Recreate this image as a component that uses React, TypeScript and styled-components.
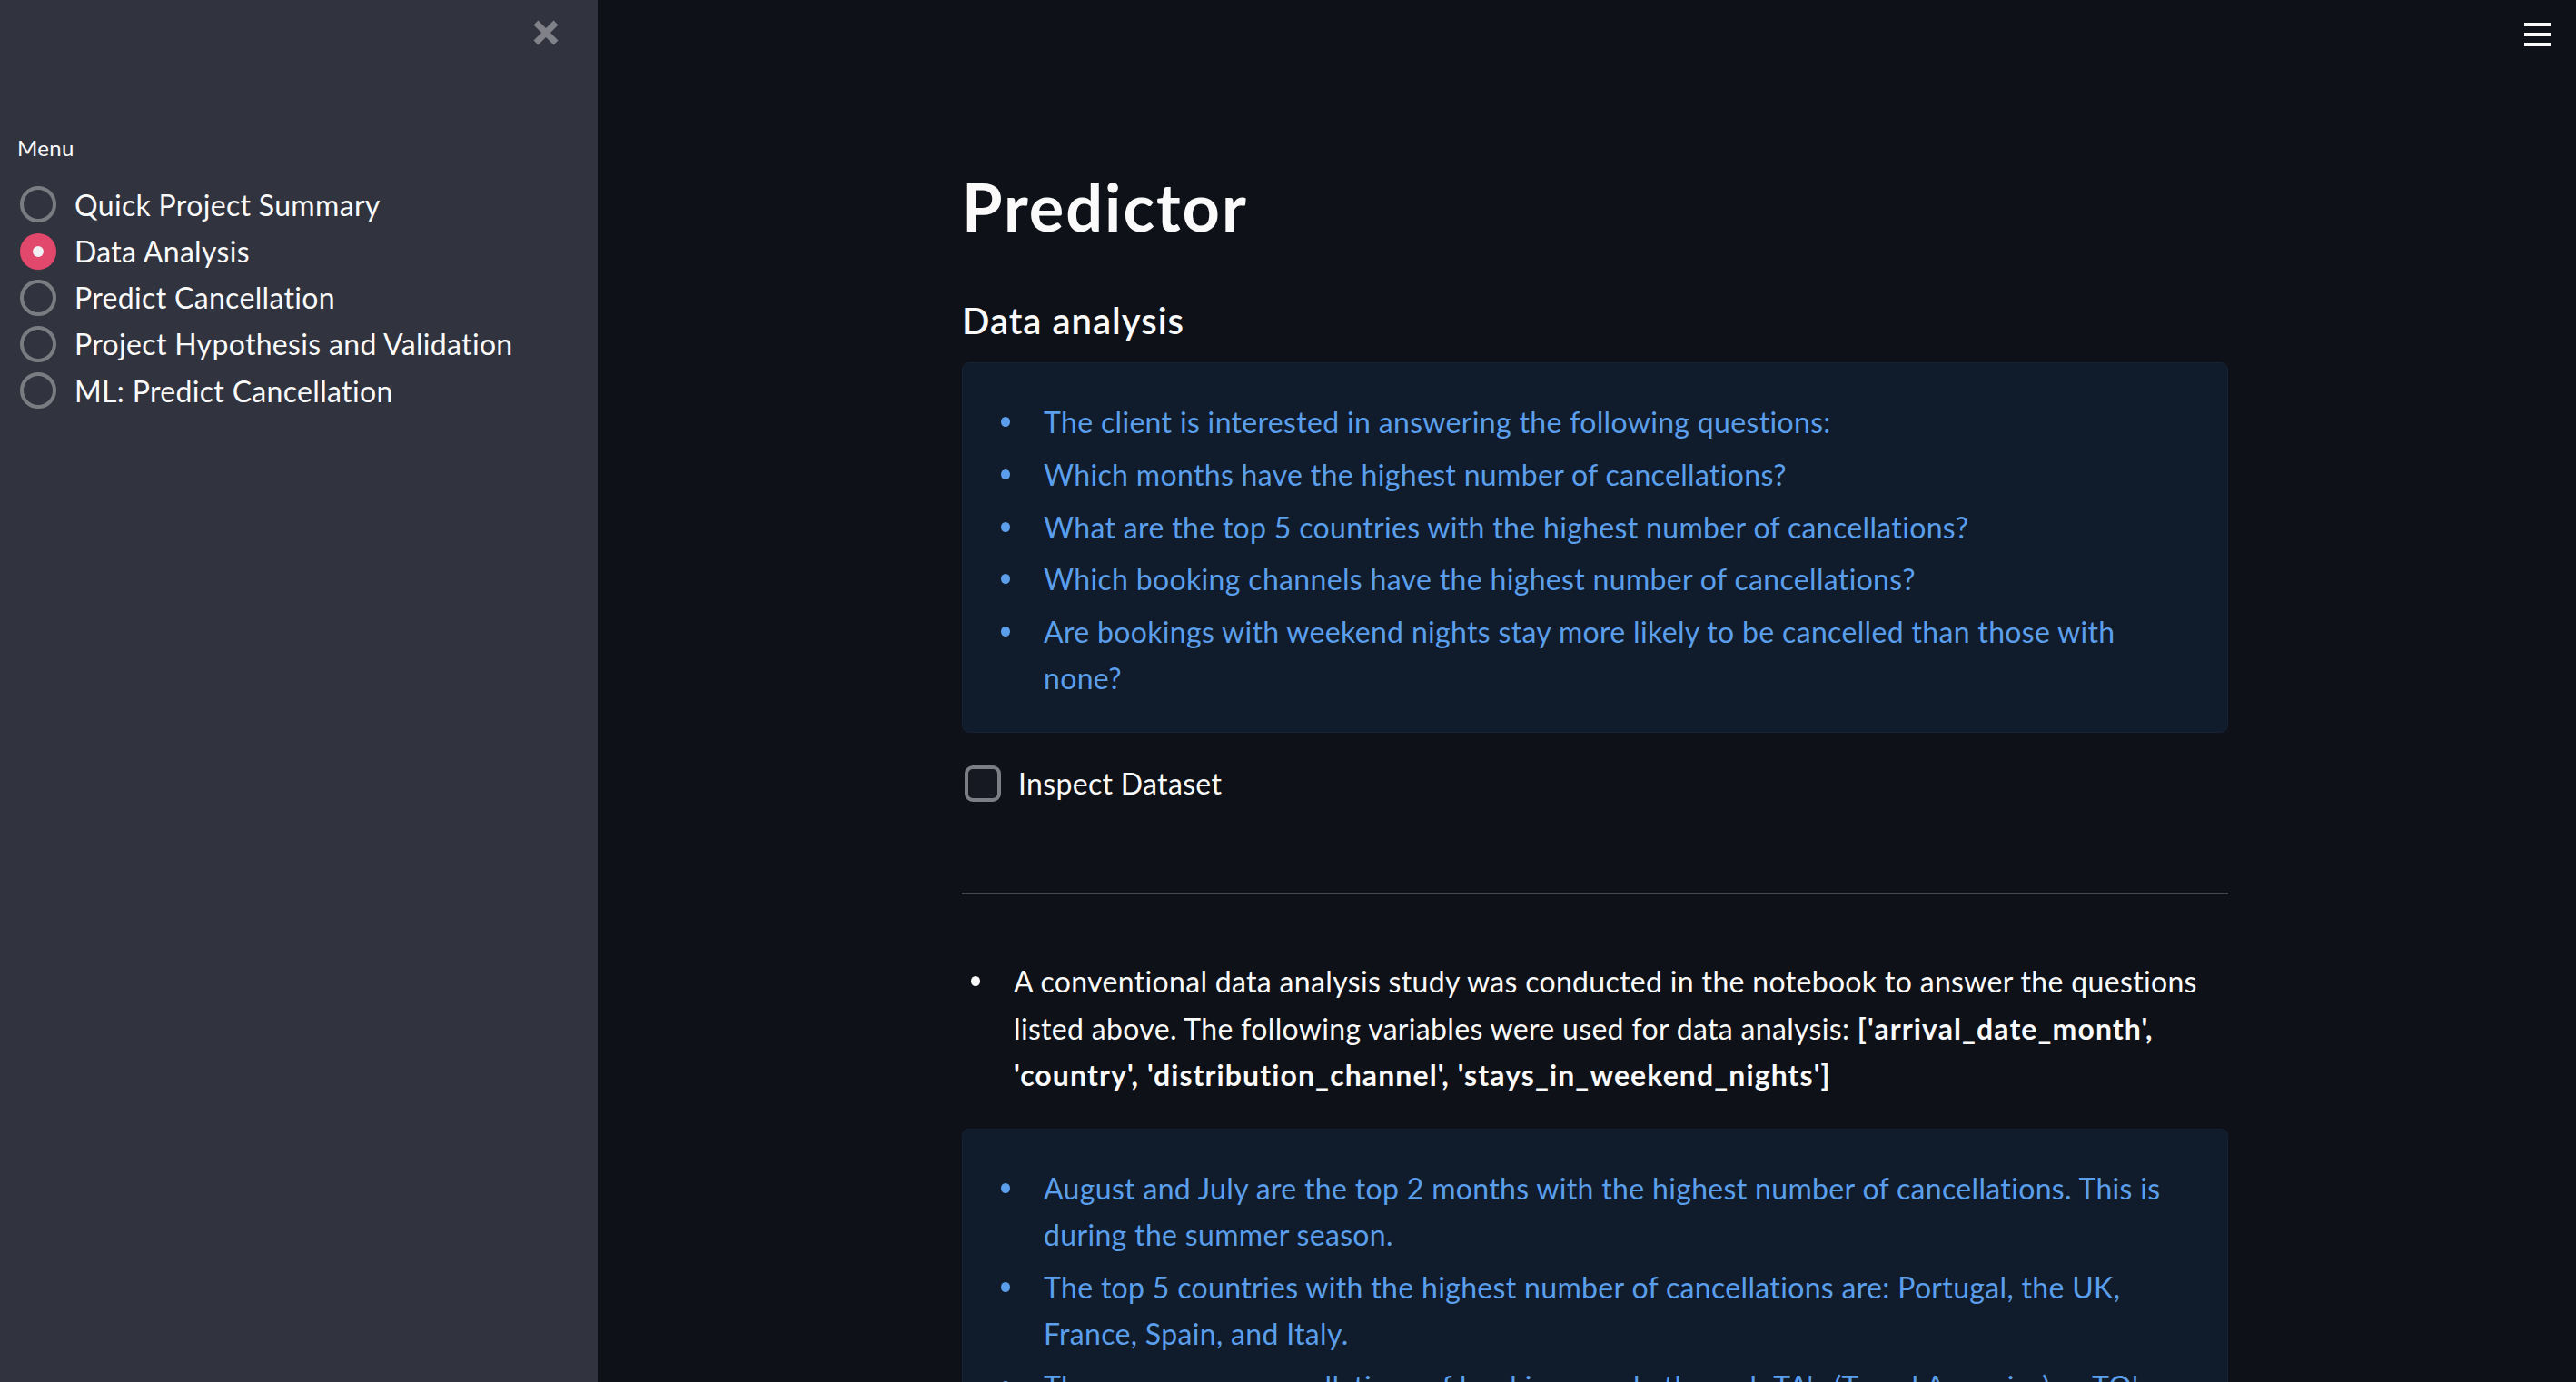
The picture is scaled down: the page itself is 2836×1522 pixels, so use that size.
import React, { useState } from "react";
import styled, { createGlobalStyle } from "styled-components";

const GlobalStyle = createGlobalStyle`
  html, body {
    margin: 0;
    padding: 0;
    background: #0e1117;
    color: #fafafa;
    font-family: Lato, "Liberation Sans", sans-serif;
    letter-spacing: 0.33px;
  }
  * {
    box-sizing: border-box;
  }
`;

const Shell = styled.div`
  display: flex;
  height: 100vh;
  overflow: hidden;
`;

const Sidebar = styled.aside`
  width: 658px;
  flex-shrink: 0;
  background: #31333f;
  padding: 22px 19px 0 19px;
  display: flex;
  flex-direction: column;
`;

const CloseRow = styled.div`
  display: flex;
  justify-content: flex-end;
  padding-right: 23px;
  height: 28px;
`;

const CloseButton = styled.button`
  background: none;
  border: none;
  padding: 0;
  width: 30px;
  height: 30px;
  margin-top: -1px;
  cursor: pointer;
  color: #808189;
`;

const MenuLabel = styled.div`
  margin-top: 99px;
  font-size: 24px;
  line-height: 1.2;
`;

const RadioList = styled.div`
  margin-top: 22px;
  display: flex;
  flex-direction: column;
`;

const RadioRow = styled.label`
  display: flex;
  align-items: center;
  gap: 20px;
  padding-left: 3px;
  font-size: 32px;
  line-height: 51.2px;
  cursor: pointer;
`;

const RadioDot = styled.span<{ $checked: boolean }>`
  width: 40px;
  height: 40px;
  border-radius: 50%;
  flex-shrink: 0;
  display: flex;
  align-items: center;
  justify-content: center;
  border: ${({ $checked }) => ($checked ? "none" : "4px solid #7b7c82")};
  background: ${({ $checked }) => ($checked ? "#e2486b" : "transparent")};
  &::after {
    content: "";
    display: ${({ $checked }) => ($checked ? "block" : "none")};
    width: 12px;
    height: 12px;
    border-radius: 50%;
    background: #f0f0f5;
  }
`;

const Main = styled.main`
  flex: 1;
  position: relative;
  overflow: hidden;
`;

const MenuButton = styled.button`
  position: absolute;
  top: 25px;
  right: 28px;
  width: 29px;
  height: 26px;
  padding: 0;
  background: none;
  border: none;
  display: flex;
  flex-direction: column;
  justify-content: space-between;
  cursor: pointer;
`;

const Bar = styled.span`
  display: block;
  height: 4px;
  background: #fafafa;
`;

const Content = styled.div`
  width: 1394px;
  margin-left: 401px;
  padding-top: 184px;
`;

const Title = styled.h1`
  margin: 0;
  font-size: 72px;
  font-weight: 700;
  line-height: 1.2;
  letter-spacing: 2px;
`;

const SubTitle = styled.h3`
  margin: 59px 0 0;
  font-size: 40px;
  font-weight: 600;
  line-height: 1.2;
  letter-spacing: 1px;
`;

const InfoBox = styled.div<{ $gap: number }>`
  margin-top: ${({ $gap }) => $gap}px;
  background: #101c2b;
  border: 1px solid #142236;
  border-radius: 8px;
  padding: 39px 64px 34px 32px;
  color: #5b9fec;
`;

const BulletList = styled.ul`
  margin: 0;
  padding-left: 57px;
  list-style: none;
  font-size: 32px;
  line-height: 51.2px;
  li {
    position: relative;
  }
  li::before {
    content: "";
    position: absolute;
    left: -47px;
    top: 20px;
    width: 10px;
    height: 11px;
    border-radius: 50%;
    background: currentColor;
  }
  li + li {
    margin-top: 6.4px;
  }
`;

const CheckRow = styled.label`
  margin-top: 30px;
  display: flex;
  align-items: center;
  gap: 19px;
  padding-left: 3px;
  font-size: 32px;
  line-height: 51.2px;
  cursor: pointer;
`;

const CheckBox = styled.span`
  width: 40px;
  height: 40px;
  border: 4px solid #7c7e85;
  border-radius: 9px;
  background: #161922;
  flex-shrink: 0;
`;

const Divider = styled.hr`
  margin: 95px 0 0;
  border: none;
  height: 2px;
  background: #45474d;
`;

const TextList = styled(BulletList)`
  margin-top: 70px;
  color: #fafafa;
  strong {
    letter-spacing: 1.1px;
  }
`;

const CloseIcon = () => (
  <svg width="30" height="30" viewBox="0 0 30 30">
    <path
      d="M4 4 L26 26 M26 4 L4 26"
      stroke="currentColor"
      strokeWidth="7"
      strokeLinecap="butt"
    />
  </svg>
);

const pages = [
  "Quick Project Summary",
  "Data Analysis",
  "Predict Cancellation",
  "Project Hypothesis and Validation",
  "ML: Predict Cancellation",
];

const questions = [
  "The client is interested in answering the following questions:",
  "Which months have the highest number of cancellations?",
  "What are the top 5 countries with the highest number of cancellations?",
  "Which booking channels have the highest number of cancellations?",
  "Are bookings with weekend nights stay more likely to be cancelled than those with none?",
];

const findings = [
  "August and July are the top 2 months with the highest number of cancellations. This is during the summer season.",
  "The top 5 countries with the highest number of cancellations are: Portugal, the UK, France, Spain, and Italy.",
  "There are more cancellations of bookings made through TA's (Travel Agencies) or TO's (Tour Operators) than through other channels.",
  "Bookings with weekend nights stay are slightly more likely to be cancelled.",
];

const App = () => {
  const [page, setPage] = useState("Data Analysis");

  return (
    <Shell>
      <GlobalStyle />
      <Sidebar>
        <CloseRow>
          <CloseButton aria-label="Close sidebar">
            <CloseIcon />
          </CloseButton>
        </CloseRow>
        <MenuLabel>Menu</MenuLabel>
        <RadioList>
          {pages.map((p) => (
            <RadioRow key={p} onClick={() => setPage(p)}>
              <RadioDot $checked={p === page} />
              {p}
            </RadioRow>
          ))}
        </RadioList>
      </Sidebar>
      <Main>
        <MenuButton aria-label="Menu">
          <Bar />
          <Bar />
          <Bar />
        </MenuButton>
        <Content>
          <Title>Predictor</Title>
          <SubTitle>Data analysis</SubTitle>
          <InfoBox $gap={22}>
            <BulletList>
              {questions.map((q) => (
                <li key={q}>{q}</li>
              ))}
            </BulletList>
          </InfoBox>
          <CheckRow>
            <CheckBox />
            Inspect Dataset
          </CheckRow>
          <Divider />
          <TextList>
            <li>
              A conventional data analysis study was conducted in the notebook
              to answer the questions listed above. The following variables
              were used for data analysis:{" "}
              <strong>
                ['arrival_date_month', 'country', 'distribution_channel',
                'stays_in_weekend_nights']
              </strong>
            </li>
          </TextList>
          <InfoBox $gap={34}>
            <BulletList>
              {findings.map((f) => (
                <li key={f}>{f}</li>
              ))}
            </BulletList>
          </InfoBox>
        </Content>
      </Main>
    </Shell>
  );
};

export default App;
